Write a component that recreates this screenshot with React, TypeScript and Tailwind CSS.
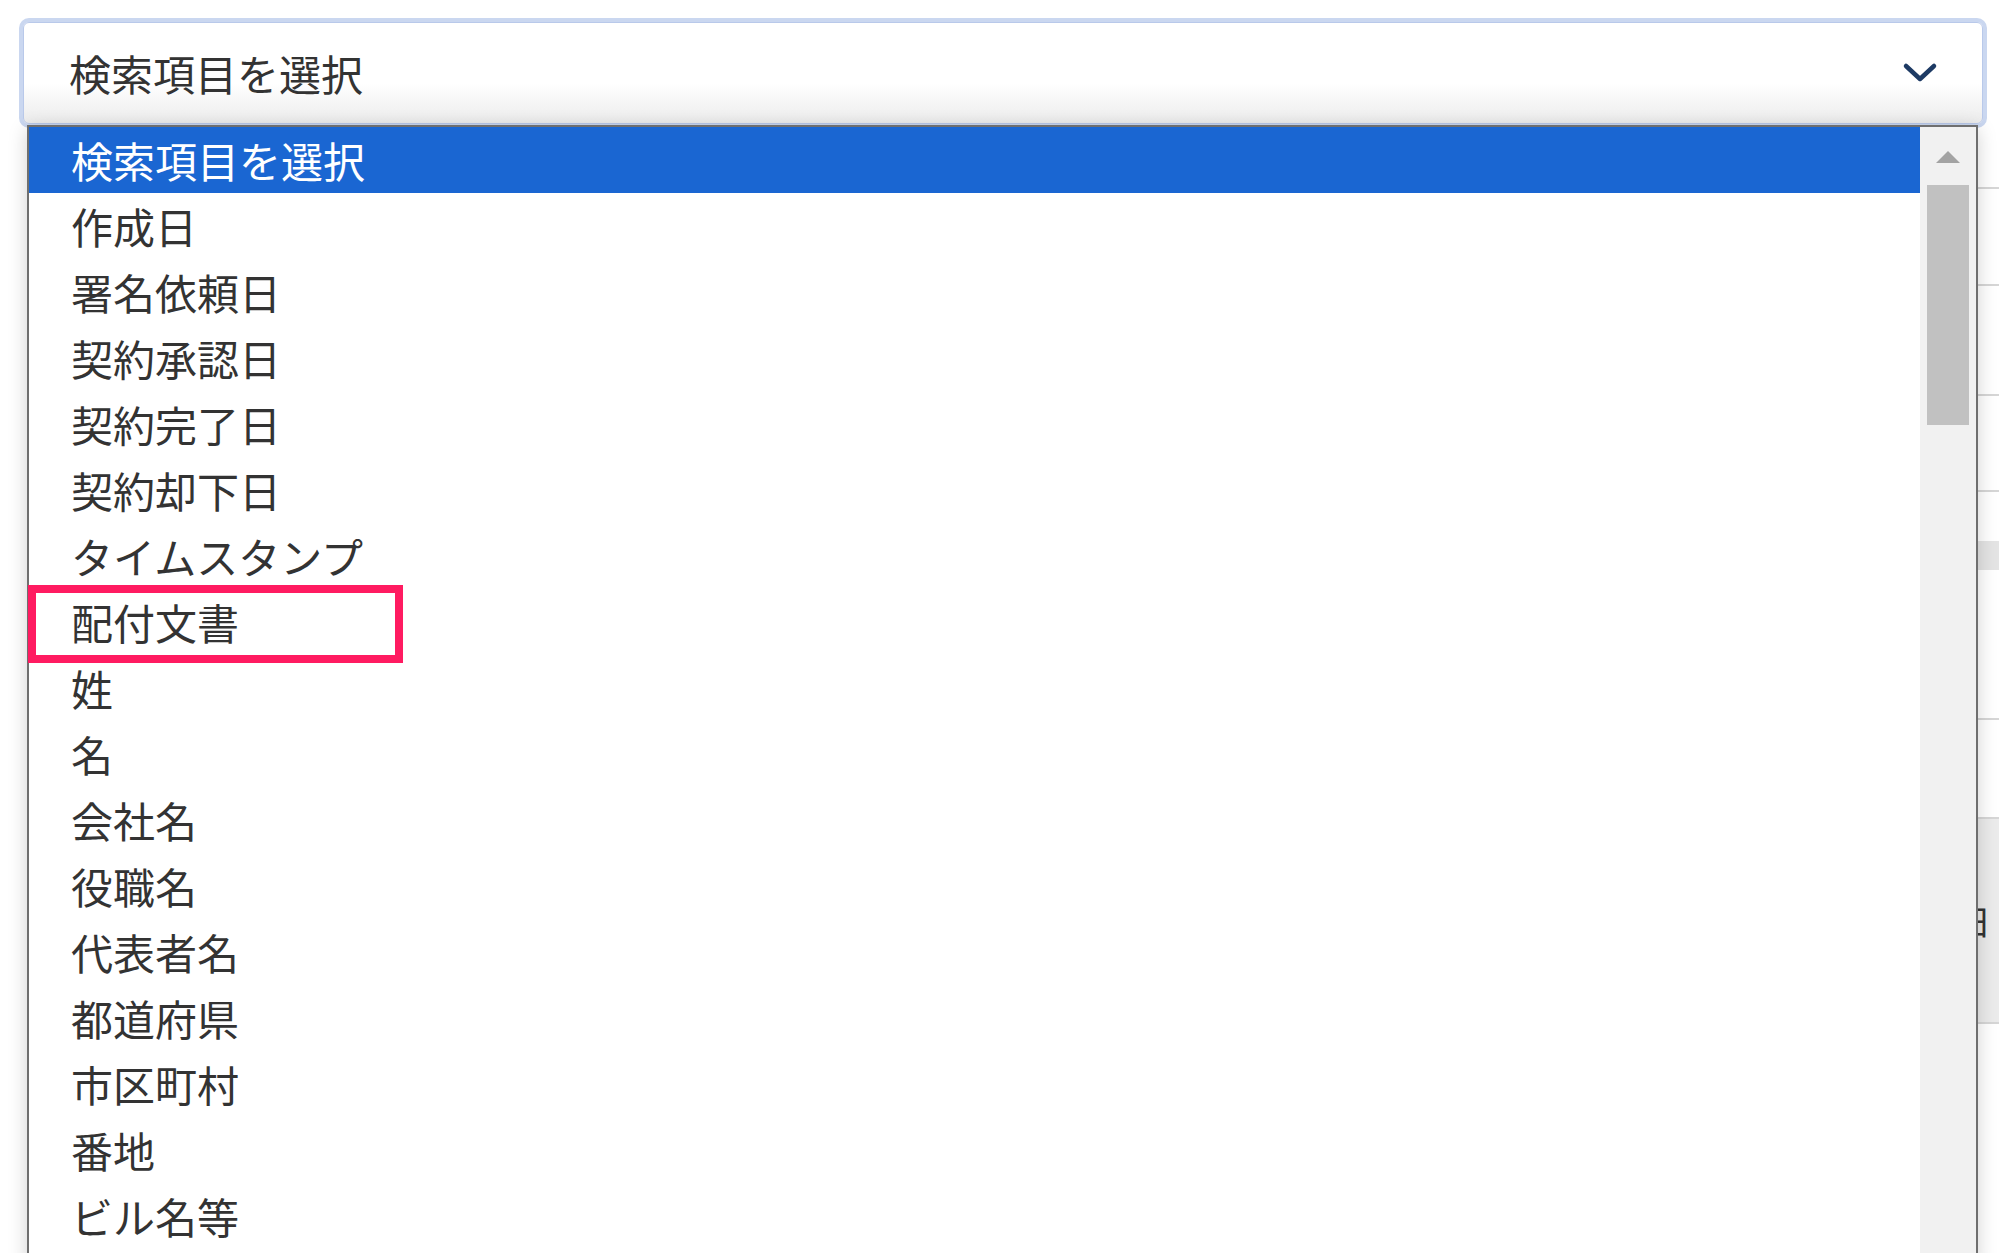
import React from "react";

const options = [
  "検索項目を選択",
  "作成日",
  "署名依頼日",
  "契約承認日",
  "契約完了日",
  "契約却下日",
  "タイムスタンプ",
  "配付文書",
  "姓",
  "名",
  "会社名",
  "役職名",
  "代表者名",
  "都道府県",
  "市区町村",
  "番地",
  "ビル名等",
];

const ChevronDown = () => (
  <svg width="36" height="22" viewBox="0 0 36 22" fill="none">
    <path
      d="M4 4 L18 17 L32 4"
      stroke="#1d3a64"
      strokeWidth="4.5"
      strokeLinecap="round"
      strokeLinejoin="round"
    />
  </svg>
);

const App = () => {
  return (
    <div className='relative w-[1999px] h-[1253px] overflow-hidden bg-white font-["Noto_Sans_CJK_JP","Noto_Sans",sans-serif]'>
      {/* select box */}
      <div className="pt-[22px] pl-[23px]">
        <div className="w-[1960px] h-[102px] rounded-[6px] border border-[#b9c9ea] ring-4 ring-[#cad7f0] bg-linear-to-b from-white from-60% to-[#ececec] flex items-center justify-between pl-[45px] pr-[44px]">
          <span className="text-[42px] leading-none text-[#333333]">
            検索項目を選択
          </span>
          <ChevronDown />
        </div>
      </div>

      {/* page content behind the dropdown */}
      <div className="flex flex-col ml-[60px]">
        <div className="h-[65px] border-b-2 border-[#d6d6d6]" />
        <div className="h-[97px] border-b-2 border-[#d6d6d6]" />
        <div className="h-[110px] border-b-2 border-[#d6d6d6]" />
        <div className="h-[96px] border-b-2 border-[#d6d6d6]" />
        <div className="h-[49px]" />
        <div className="h-[29px] bg-[#e4e4e4]" />
        <div className="h-[150px] border-b-2 border-[#d6d6d6]" />
        <div className="h-[99px] border-b-2 border-[#d6d6d6]" />
        <div className="h-[205px] border-b-2 border-[#d6d6d6] bg-[#ebebeb] flex items-center justify-end pr-[8px]">
          <span className="text-[34px] leading-none text-[#333333]">日</span>
        </div>
        <div className="h-[240px]" />
      </div>

      {/* open dropdown list */}
      <div className="absolute left-[27px] top-[125px] w-[1951px] h-[1140px] border-2 border-b-0 border-[#6f6f6f] bg-white shadow-[0_4px_18px_rgba(0,0,0,0.18)] flex">
        <div className="flex-1 flex flex-col">
          {options.map((label, i) => (
            <div
              key={label}
              className={`h-[66px] shrink-0 flex items-center pl-[42px] text-[42px] leading-none ${
                i === 0 ? "bg-[#1a66d2] text-white" : "text-[#333333]"
              }`}
            >
              {label}
            </div>
          ))}
        </div>
        {/* scrollbar */}
        <div className="w-[56px] shrink-0 bg-[#f1f1f1] flex flex-col items-center">
          <div className="h-[58px] w-full flex justify-center pt-[24px]">
            <div className="w-0 h-0 border-x-[12px] border-x-transparent border-b-[12px] border-b-[#a3a3a3]" />
          </div>
          <div className="w-[42px] h-[240px] bg-[#c1c1c1]" />
        </div>
      </div>

      {/* highlight annotation */}
      <div className="absolute left-[28px] top-[585px] w-[375px] h-[78px] border-[8px] border-[#ff1b61]" />
    </div>
  );
};

export default App;
